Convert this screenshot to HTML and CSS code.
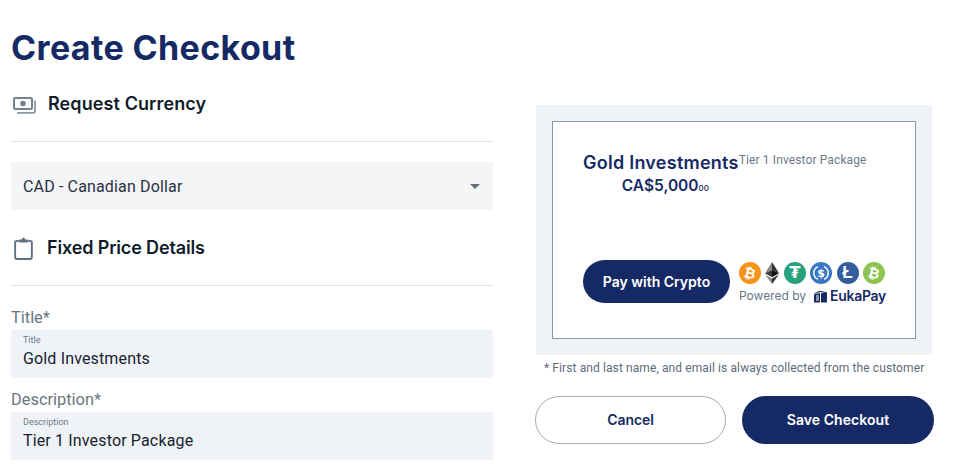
FILE: index.html
```html
<!DOCTYPE html>
<html lang="en">
<head>
<meta charset="utf-8">
<title>Create Checkout</title>
<link rel="stylesheet" href="styles.css">
</head>
<body>
<main class="page">
  <section class="left">
    <h1 class="page-title">Create Checkout</h1>
    <div class="section-head head-currency">
      <svg class="sec-icon money" viewBox="0 0 23 17" width="23" height="17" aria-hidden="true">
        <rect x="1" y="1" width="18" height="11" rx="1.500" fill="none" stroke="#74828f" stroke-width="2"/>
        <circle cx="10" cy="6.500" r="2.800" fill="#74828f"/>
        <path d="M22 3.500V14c0 1-.6 1.800-1.800 1.800H4" fill="none" stroke="#8b97a3" stroke-width="1.800"/>
      </svg>
      <h2 class="section-title title-currency">Request Currency</h2>
    </div>
    <hr class="rule">
    <div class="select">
      <span>CAD - Canadian Dollar</span>
      <span class="caret"></span>
    </div>
    <div class="section-head head-details">
      <svg class="sec-icon" viewBox="0 0 20 24" width="19" height="23" aria-hidden="true">
        <path d="M5.500 4H3.200C2 4 1.200 4.800 1.200 6v15c0 1.200.8 2 2 2h13.600c1.200 0 2-.8 2-2V6c0-1.200-.8-2-2-2h-2.300" fill="none" stroke="#5f7080" stroke-width="2"/>
        <path d="M5.500 2.600h2.700C8.500 1.500 9.100.8 10 .8s1.500.7 1.800 1.800h2.700v3.200h-9z" fill="#5f7080"/>
      </svg>
      <h2 class="section-title title-details">Fixed Price Details</h2>
    </div>
    <hr class="rule">
    <div class="field field-title">
      <label class="field-label">Title*</label>
      <div class="input">
        <span class="mini">Title</span>
        <span class="value">Gold Investments</span>
      </div>
    </div>
    <div class="field field-desc">
      <label class="field-label">Description*</label>
      <div class="input">
        <span class="mini">Description</span>
        <span class="value">Tier 1 Investor Package</span>
      </div>
    </div>
  </section>

  <section class="right">
    <div class="preview">
      <div class="card">
        <div class="card-top">
          <div class="card-main">
            <div class="card-name">Gold Investments</div>
            <div class="card-price">CA$5,000<span class="cents">00</span></div>
          </div>
          <div class="card-desc">Tier 1 Investor Package</div>
        </div>
        <div class="card-bottom">
          <div class="pay">Pay with Crypto</div>
          <div class="brand">
            <div class="coins">
              <span class="coin btc"><span class="tilt">₿</span></span>
              <svg class="eth" viewBox="0 0 14 22" width="14" height="22" aria-hidden="true">
                <path d="M7 0L0 11.200 7 8z" fill="#8a8a8a"/>
                <path d="M7 0l7 11.200L7 8z" fill="#333"/>
                <path d="M0 11.200L7 8v7.300z" fill="#3c3c3c"/>
                <path d="M14 11.200L7 8v7.300z" fill="#111"/>
                <path d="M0 12.600L7 22v-5.500z" fill="#8a8a8a"/>
                <path d="M14 12.600L7 22v-5.500z" fill="#333"/>
              </svg>
              <span class="coin usdt">₮</span>
              <svg class="usdc" viewBox="0 0 22 22" width="22" height="22" aria-hidden="true">
                <circle cx="11" cy="11" r="11" fill="#3a77c2"/>
                <path d="M8 4.600a7 7 0 0 0 0 12.800M14 4.600a7 7 0 0 1 0 12.800" fill="none" stroke="#fff" stroke-width="1.500"/>
                <text class="usdc-sign" x="11" y="15" text-anchor="middle">$</text>
              </svg>
              <span class="coin ltc">Ł</span>
              <span class="coin bch"><span class="tilt">₿</span></span>
            </div>
            <div class="powered">
              <span class="powered-by">Powered by</span>
              <svg class="euka-mark" viewBox="0 0 13 13" width="13" height="13" aria-hidden="true">
                <path d="M0 3.200L6 .8l6.500 1.500v1L6.300 2 1 3.800z" fill="#152a64"/>
                <path d="M0 4.500l6-1.500v9.500H0z" fill="#152a64"/>
                <path d="M7 3.300l6-.5V12.500H7z" fill="#152a64"/>
                <path d="M2 6h3M2 8h3M2 10h3" stroke="#fff" stroke-width="1"/>
              </svg>
              <span class="euka">EukaPay</span>
            </div>
          </div>
        </div>
      </div>
    </div>
    <p class="note">* First and last name, and email is always collected from the customer</p>
    <div class="actions">
      <button class="btn cancel" type="button">Cancel</button>
      <button class="btn save" type="button">Save Checkout</button>
    </div>
  </section>
</main>
</body>
</html>
```
FILE: styles.css
```css
* { box-sizing: border-box; }
html, body { margin: 0; padding: 0; height: 475px; overflow: hidden; background: #fff; }
body { font-family: Roboto, "Liberation Sans", sans-serif; color: #1a2433; }

.page { display: flex; align-items: flex-start; padding-left: 11px; height: 475px; overflow: hidden; }
.left { width: 482px; flex: none; }
.right { width: 399px; flex: none; margin-left: 42px; padding-top: 105px; }

.page-title {
  margin: 0;
  padding-top: 27px;
  font: 700 34px/42px Inter, "Open Sans", sans-serif;
  letter-spacing: 0.37px;
  color: #152a64;
  white-space: nowrap;
}

.section-head { display: flex; align-items: center; }
.head-currency { margin-top: 20px; height: 30px; }
.head-details { margin-top: 23px; height: 30px; }
.sec-icon { flex: none; margin-left: 2px; }
.money { margin-right: 12px; margin-top: 3px; }
.head-details .sec-icon { margin-right: 14px; margin-left: 3px; }
.section-title {
  margin: 0;
  font: 600 18px/30px Inter, "Open Sans", sans-serif;
  color: #101c2c;
}
.title-currency { letter-spacing: 0.1px; }
.title-details { letter-spacing: -0.15px; }

.rule { margin: 0; border: 0; height: 1px; background: #e0e1e3; }
.head-currency + .rule { margin-top: 22px; }
.head-details + .rule { margin-top: 22px; }

.select {
  margin-top: 20px;
  height: 48px;
  padding: 0 13px 0 12px;
  background: #f4f5f7;
  display: flex;
  align-items: center;
  justify-content: space-between;
  font-size: 16px;
  letter-spacing: 0.15px;
  color: #28323f;
}
.caret { width: 0; height: 0; border-left: 5.500px solid transparent; border-right: 5.500px solid transparent; border-top: 5.500px solid #666f79; }

.field-title { margin-top: 20px; }
.field-desc { margin-top: 10px; }
.field-label { display: block; font-size: 16.400px; line-height: 23px; padding-bottom: 1px; color: #6a7682; }
.input {
  height: 48px;
  background: #eff3f8;
  padding: 5px 12px 0;
  display: flex;
  flex-direction: column;
}
.mini { font-size: 9px; line-height: 11px; color: #6b7b8d; }
.value { font-size: 16px; line-height: 24px; margin-top: 1px; letter-spacing: 0.15px; color: #18222e; }

.preview { background: #eff3f8; padding: 16px; margin: 0 2px 0 1px; }
.card {
  height: 218px;
  background: #fff;
  border: 1px solid #8b98aa;
  padding: 30px 30px 35px;
  display: flex;
  flex-direction: column;
  justify-content: space-between;
}
.card-top { display: flex; align-items: flex-start; }
.card-main { flex: none; text-align: center; }
.card-name { font: 600 18px/22px Inter, "Open Sans", sans-serif; letter-spacing: 0.25px; color: #152a64; white-space: nowrap; }
.card-price { padding-left: 9px; font: 600 15.500px/24px Inter, "Open Sans", sans-serif; color: #152a64; }
.cents { font-size: 8px; font-weight: 500; }
.card-desc { font-size: 12px; line-height: 14px; margin-top: 1px; letter-spacing: .12px; color: #6d7a8a; white-space: nowrap; }

.card-bottom { display: flex; align-items: flex-end; justify-content: space-between; }
.pay {
  width: 147px;
  height: 43px;
  border-radius: 22px;
  background: #152a64;
  color: #fff;
  font: 600 14px/43px Inter, "Open Sans", sans-serif;
  text-align: center;
}
.brand { width: 146px; margin-bottom: -3px; }
.coins { display: flex; justify-content: space-between; align-items: center; height: 24px; }
.coin {
  width: 22px; height: 22px; border-radius: 50%;
  color: #fff; font: 700 14px/22px "DejaVu Sans", sans-serif;
  text-align: center; flex: none; overflow: hidden;
}
.tilt { display: block; transform: rotate(12deg); }
.btc { background: #f7931a; }
.usdt { background: #26a17b; font-size: 16px; }
.usdc { flex: none; }
.usdc-sign { font: 700 11px "DejaVu Sans", sans-serif; fill: #fff; }
.ltc { background: #345d9d; font-size: 17px; font-family: "Liberation Sans", sans-serif; }
.bch { background: #8dc351; }
.eth { flex: none; }
.powered { display: flex; align-items: center; margin-top: 1px; height: 20px; }
.powered-by { font: 400 12px/20px Inter, sans-serif; color: #66768a; margin-right: 8px; white-space: nowrap; }
.euka-mark { flex: none; margin-right: 3px; }
.euka { font: 600 14px/20px Inter, "Open Sans", sans-serif; letter-spacing: -0.3px; color: #152a64; }

.note { margin: 4px 0 0; padding-left: 9px; font-size: 12px; line-height: 18px; letter-spacing: .1px; color: #5e6a78; white-space: nowrap; }
.actions { display: flex; justify-content: space-between; margin-top: 19px; }
.btn { height: 48px; border-radius: 24px; font: 600 14px/1 Inter, "Open Sans", sans-serif; cursor: pointer; }
.cancel { width: 191px; background: #fff; border: 1px solid #a3acb8; color: #152a64; letter-spacing: -0.1px; }
.save { width: 192px; background: #152a64; border: 0; color: #fff; letter-spacing: 0.05px; }
```
